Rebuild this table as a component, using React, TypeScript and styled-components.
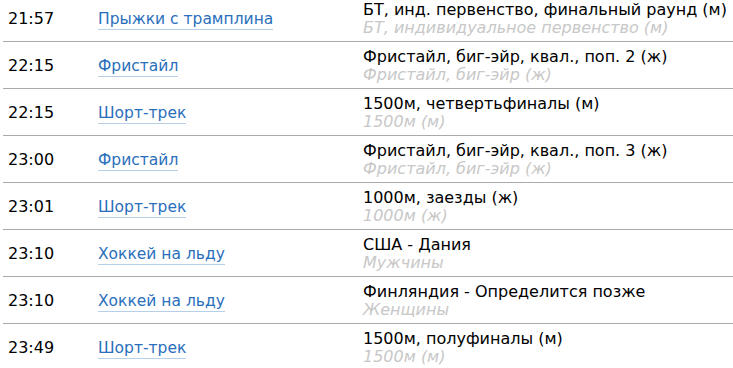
import styled, { createGlobalStyle } from "styled-components";

const GlobalStyle = createGlobalStyle`
  body {
    margin: 0;
    background: #fff;
    font-family: "DejaVu Sans", "Liberation Sans", sans-serif;
  }
`;

const Schedule = styled.div`
  margin: -5px 0 0 3px;
`;

const Row = styled.div`
  display: grid;
  grid-template-columns: 95px 265px 1fr;
  align-items: center;
  height: 46px;
  border-bottom: 1px solid #aaaaaa;
`;

const Time = styled.div`
  padding-left: 5px;
  font-size: 16px;
  color: #000;
`;

const SportLink = styled.a`
  justify-self: start;
  font-size: 15.5px;
  color: #2a6fbc;
  text-decoration: none;
  padding-bottom: 1px;
  border-bottom: 1px solid #b7d0ea;
`;

const Event = styled.div`
  display: flex;
  flex-direction: column;
  white-space: nowrap;
  padding-top: 1px;
`;

const Title = styled.span`
  font-size: 16px;
  line-height: 19px;
  color: #000;
`;

const Subtitle = styled.span`
  font-size: 16px;
  line-height: 19px;
  margin-top: -1px;
  font-style: italic;
  color: #c8c8c8;
`;

interface Item {
  time: string;
  sport: string;
  title: string;
  subtitle: string;
}

const items: Item[] = [
  { time: "21:57", sport: "Прыжки с трамплина", title: "БТ, инд. первенство, финальный раунд (м)", subtitle: "БТ, индивидуальное первенство (м)" },
  { time: "22:15", sport: "Фристайл", title: "Фристайл, биг-эйр, квал., поп. 2 (ж)", subtitle: "Фристайл, биг-эйр (ж)" },
  { time: "22:15", sport: "Шорт-трек", title: "1500м, четвертьфиналы (м)", subtitle: "1500м (м)" },
  { time: "23:00", sport: "Фристайл", title: "Фристайл, биг-эйр, квал., поп. 3 (ж)", subtitle: "Фристайл, биг-эйр (ж)" },
  { time: "23:01", sport: "Шорт-трек", title: "1000м, заезды (ж)", subtitle: "1000м (ж)" },
  { time: "23:10", sport: "Хоккей на льду", title: "США - Дания", subtitle: "Мужчины" },
  { time: "23:10", sport: "Хоккей на льду", title: "Финляндия - Определится позже", subtitle: "Женщины" },
  { time: "23:49", sport: "Шорт-трек", title: "1500м, полуфиналы (м)", subtitle: "1500м (м)" },
];

const App = () => {
  return (
    <>
      <GlobalStyle />
      <Schedule>
        {items.map((item, i) => (
          <Row key={i}>
            <Time>{item.time}</Time>
            <div>
              <SportLink href="#">{item.sport}</SportLink>
            </div>
            <Event>
              <Title>{item.title}</Title>
              <Subtitle>{item.subtitle}</Subtitle>
            </Event>
          </Row>
        ))}
      </Schedule>
    </>
  );
};

export default App;
